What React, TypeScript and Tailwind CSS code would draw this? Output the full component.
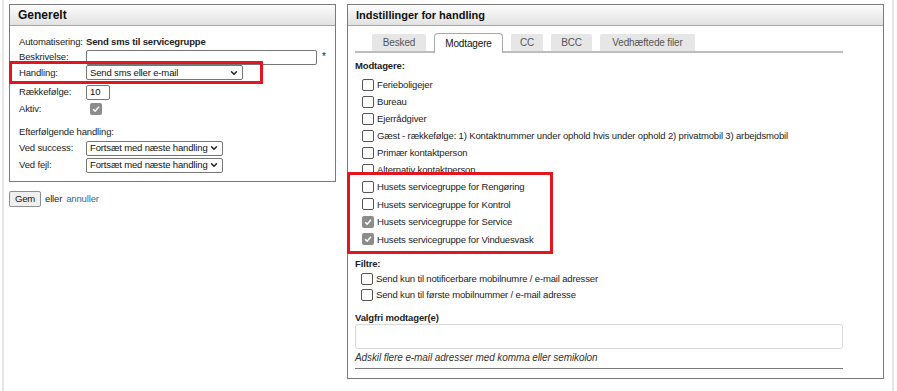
import { ChevronDown } from 'lucide-react';

const Box = ({ checked }: { checked?: boolean }) =>
    checked ? (
        <span className="w-[12px] h-[12px] shrink-0 rounded-[2px] bg-[#8c8c8c] flex items-center justify-center">
            <svg viewBox="0 0 12 12" className="w-[10px] h-[10px]">
                <path d="M2.5 6.3 L5 8.6 L9.6 3.4" stroke="white" strokeWidth="1.8" fill="none" />
            </svg>
        </span>
    ) : (
        <span className="w-[12px] h-[12px] shrink-0 rounded-[2px] border border-[#555] bg-white" />
    );

const Select = ({ text, width }: { text: string; width: string }) => (
    <div className={`${width} h-[15px] border border-[#767676] rounded-[2px] bg-white flex items-center justify-between pl-[3px] pr-[3px]`}>
        <span className="text-[#111]">{text}</span>
        <ChevronDown size={10} strokeWidth={3.5} className="text-[#222]" />
    </div>
);

const Header = ({ title, size }: { title: string; size: string }) => (
    <div className={`h-[21px] border-b border-[#a5a5a5] bg-linear-to-b from-[#fcfcfc] to-[#e2e2e2] pl-[8px] flex items-center font-bold text-[#111] ${size}`}>
        {title}
    </div>
);

const Option = ({ label, checked, h = 'h-[17px]', inset = 'ml-[7px]' }: { label: string; checked?: boolean; h?: string; inset?: string }) => (
    <div className={`flex items-center gap-[3px] ${h} ${inset}`}>
        <Box checked={checked} />
        <span>{label}</span>
    </div>
);

const tabs = [
    { name: 'Besked', w: 'w-[54px]' },
    { name: 'Modtagere', w: 'w-[69px]', active: true },
    { name: 'CC', w: 'w-[32px]' },
    { name: 'BCC', w: 'w-[41px]' },
    { name: 'Vedhæftede filer', w: 'w-[95px]' },
];

export default function App() {
    return (
        <div className="w-[897px] h-[391px] bg-white overflow-hidden font-['Liberation_Sans',Arial,sans-serif] text-[9.5px] tracking-[-0.15px] text-[#222] leading-none">
            <div className="ml-[2px] w-[892px] h-full border-x-2 border-[#e6e6e6] pt-[4px] pl-[5px] flex items-start gap-[11px]">
                {/* left column */}
                <div className="w-[327px]">
                    <div className="border border-[#7a7a7a]">
                        <Header title="Generelt" size="text-[12px] tracking-[0px]" />
                        <div className="pl-[9px] pt-[8px] pb-[8px]">
                            <div className="h-[15px] flex items-center">
                                <span className="w-[67px]">Automatisering:</span>
                                <span className="font-bold">Send sms til servicegruppe</span>
                            </div>
                            <div className="h-[16px] flex items-center">
                                <span className="w-[67px]">Beskrivelse:</span>
                                <div className="w-[231px] h-[15px] border border-[#767676] rounded-[2px] bg-white" />
                                <span className="ml-[5px] text-[10px]">*</span>
                            </div>
                            <div className="relative -mt-[4px] -ml-[10px] w-[254px] border-[3px] border-[#e3151f] pl-[7px] h-[23px] flex items-center">
                                <span className="w-[67px]">Handling:</span>
                                <Select text="Send sms eller e-mail" width="w-[157px]" />
                            </div>
                            <div className="h-[16px] flex items-center">
                                <span className="w-[67px]">Rækkefølge:</span>
                                <div className="w-[24px] h-[15px] border border-[#767676] rounded-[2px] bg-white flex items-center pl-[3px] text-[#111]">10</div>
                            </div>
                            <div className="h-[18px] flex items-center">
                                <span className="w-[71px]">Aktiv:</span>
                                <Box checked />
                            </div>
                            <div className="mt-[7px] h-[14px] flex items-center">Efterfølgende handling:</div>
                            <div className="mt-[1px] h-[16px] flex items-center">
                                <span className="w-[67px]">Ved success:</span>
                                <Select text="Fortsæt med næste handling" width="w-[137px]" />
                            </div>
                            <div className="mt-[1px] h-[16px] flex items-center">
                                <span className="w-[67px]">Ved fejl:</span>
                                <Select text="Fortsæt med næste handling" width="w-[137px]" />
                            </div>
                        </div>
                    </div>
                    <div className="mt-[9px] flex items-center gap-[4px]">
                        <button className="w-[32px] h-[16px] border border-[#8f8f8f] rounded-[2px] bg-[#efefef] text-[#111] flex items-center justify-center">Gem</button>
                        <span>eller</span>
                        <a className="text-[#2a6bb0]">annuller</a>
                    </div>
                </div>

                {/* right column */}
                <div className="w-[537px] h-[375px] border border-[#7a7a7a] flex flex-col">
                    <Header title="Indstillinger for handling" size="text-[11px] tracking-[0px]" />
                    <div className="pl-[7px] pr-[40px] pt-[7px]">
                        <div className="h-[20px] flex items-end gap-[8px] pl-[17px] border-b-2 border-[#bdbdbd]">
                            {tabs.map((t) =>
                                t.active ? (
                                    <div key={t.name} className={`${t.w} h-[20px] -mb-[2px] bg-white border border-b-0 border-[#a8a8a8] rounded-t-[4px] flex items-center justify-center text-[#111] text-[10px]`}>
                                        {t.name}
                                    </div>
                                ) : (
                                    <div key={t.name} className={`${t.w} h-[17px] bg-[#e6e6e6] rounded-t-[2px] flex items-center justify-center text-[#555] text-[10px]`}>
                                        {t.name}
                                    </div>
                                )
                            )}
                        </div>

                        <div className="mt-[6px] h-[14px] flex items-center font-bold">Modtagere:</div>
                        <div className="mt-[3px]">
                            <Option label="Ferieboligejer" />
                            <Option label="Bureau" />
                            <Option label="Ejerrådgiver" />
                            <Option label="Gæst - rækkefølge: 1) Kontaktnummer under ophold hvis under ophold 2) privatmobil 3) arbejdsmobil" />
                            <Option label="Primær kontaktperson" />
                            <Option label="Alternativ kontaktperson" />
                        </div>
                        <div className="relative -mt-[6px] -ml-[8px] w-[206px] border-[3px] border-[#e3151f] bg-white pt-[3px] pb-[3px]">
                            <Option label="Husets servicegruppe for Rengøring" h="h-[17.5px]" inset="ml-[12px]" />
                            <Option label="Husets servicegruppe for Kontrol" h="h-[17.5px]" inset="ml-[12px]" />
                            <Option label="Husets servicegruppe for Service" checked h="h-[17.5px]" inset="ml-[12px]" />
                            <Option label="Husets servicegruppe for Vinduesvask" checked h="h-[17.5px]" inset="ml-[12px]" />
                        </div>

                        <div className="mt-[3px] h-[14px] flex items-center font-bold">Filtre:</div>
                        <Option label="Send kun til notificerbare mobilnumre / e-mail adresser" h="h-[16px]" inset="ml-[6px]" />
                        <Option label="Send kun til første mobilnummer / e-mail adresse" h="h-[16px]" inset="ml-[6px]" />

                        <div className="mt-[8px] h-[13px] flex items-center font-bold">Valgfri modtager(e)</div>
                        <div className="h-[25px] border border-[#d8d8d8] rounded-[3px] bg-white" />
                        <div className="h-[18px] flex items-center italic text-[#333] text-[10px] tracking-[-0.1px]">Adskil flere e-mail adresser med komma eller semikolon</div>
                        <div className="mt-[1px] h-px bg-[#7a7a7a]" />
                    </div>
                </div>
            </div>
        </div>
    );
}
